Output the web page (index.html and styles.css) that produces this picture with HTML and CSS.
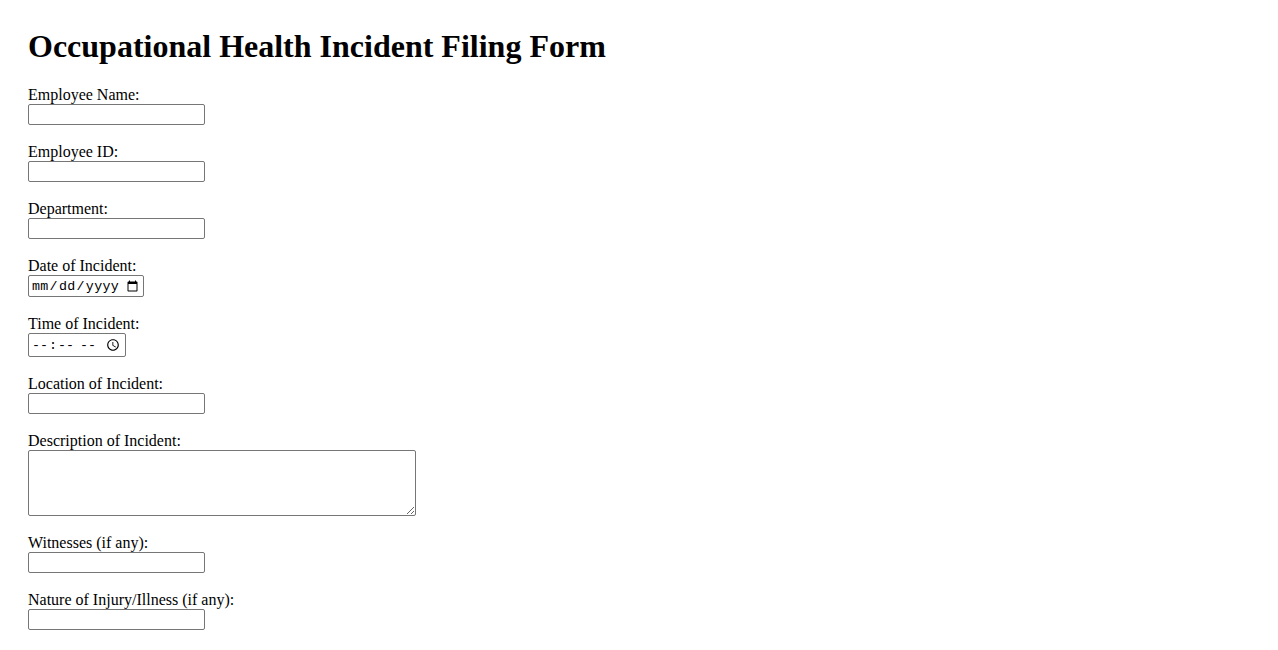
FILE: index.html
```html
<!DOCTYPE html>
<html lang="en">
<head>
<meta charset="utf-8">
<title>Occupational Health Incident Filing Form</title>
<link rel="stylesheet" href="styles.css">
</head>
<body>
<h1 class="title">Occupational Health Incident Filing Form</h1>
<form class="form">
  <div class="field">
    <label class="label" for="name">Employee Name:</label>
    <input class="text" type="text" id="name">
  </div>
  <div class="field">
    <label class="label" for="eid">Employee ID:</label>
    <input class="text" type="text" id="eid">
  </div>
  <div class="field">
    <label class="label" for="dept">Department:</label>
    <input class="text" type="text" id="dept">
  </div>
  <div class="field">
    <label class="label" for="date">Date of Incident:</label>
    <input class="date" type="date" id="date">
  </div>
  <div class="field">
    <label class="label" for="time">Time of Incident:</label>
    <input class="time" type="time" id="time">
  </div>
  <div class="field">
    <label class="label" for="loc">Location of Incident:</label>
    <input class="text" type="text" id="loc">
  </div>
  <div class="field">
    <label class="label" for="desc">Description of Incident:</label>
    <textarea class="area" id="desc"></textarea>
  </div>
  <div class="field">
    <label class="label" for="wit">Witnesses (if any):</label>
    <input class="text" type="text" id="wit">
  </div>
  <div class="field">
    <label class="label" for="inj">Nature of Injury/Illness (if any):</label>
    <input class="text" type="text" id="inj">
  </div>
</form>
</body>
</html>
```

FILE: styles.css
```css
html, body {
  background: #ffffff;
}
body {
  margin: 0;
  padding: 28px;
  font-family: "Liberation Serif", "Times New Roman", serif;
  font-size: 16px;
  color: #000000;
}
.title {
  margin: 0 0 21.44px 0;
  font-size: 32px;
  font-weight: bold;
  line-height: normal;
}
.form {
  margin: 0;
}
.field {
  margin: 0 0 18px 0;
}
.label {
  display: block;
  line-height: 18px;
}
.text,
.date,
.time,
.area {
  display: block;
  box-sizing: border-box;
  margin: 0;
  border: 1px solid #767676;
  border-radius: 2px;
  background: #ffffff;
  color: #000000;
}
.text {
  width: 177px;
  height: 21px;
  padding: 1px 2px;
  font-family: "Liberation Sans", Arial, sans-serif;
  font-size: 13.33px;
}
.date {
  width: 116px;
  height: 22px;
  padding: 1px 2px;
  font-family: "Liberation Mono", "DejaVu Sans Mono", monospace;
  font-size: 13.33px;
  letter-spacing: 0.3px;
}
.time {
  width: 98px;
  height: 24px;
  padding: 1px 2px;
  font-family: "Liberation Mono", "DejaVu Sans Mono", monospace;
  font-size: 13.33px;
}
.area {
  width: 388px;
  height: 66px;
  padding: 2px;
  resize: both;
  font-family: "Liberation Mono", monospace;
  font-size: 13.33px;
}
```
